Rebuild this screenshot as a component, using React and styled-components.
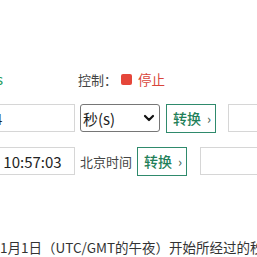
import React from 'react';
import styled, { createGlobalStyle } from 'styled-components';

const Global = createGlobalStyle`
  html, body {
    margin: 0;
    padding: 0;
    background: #fff;
    overflow: hidden;
  }
  body {
    font-family: "Noto Sans CJK SC", "Noto Sans", sans-serif;
    color: #333;
  }
`;

const Page = styled.div`
  width: 420px;
  margin-left: -90px;
  padding-top: 68px;
`;

const Row = styled.div`
  display: flex;
  align-items: center;
  height: ${p => p.h || 28}px;
  margin-bottom: ${p => p.mb || 0}px;
`;

const Status = styled.div`
  width: 93px;
  margin-right: 75px;
  display: flex;
  justify-content: flex-end;
  font-size: 14px;
  color: #2a9d5c;
  white-space: nowrap;
  overflow: hidden;
  flex-shrink: 0;
`;

const Label = styled.span`
  font-size: 13px;
  color: #444;
  margin-right: ${p => p.mr || 0}px;
  white-space: nowrap;
  flex-shrink: 0;
`;

const StopBtn = styled.span`
  display: inline-flex;
  align-items: center;
  gap: 6px;
  font-size: 13.5px;
  color: #d9453a;
`;

const Square = styled.span`
  width: 11px;
  height: 11px;
  border-radius: 2px;
  background: #e5463a;
  flex-shrink: 0;
`;

const Input = styled.div`
  box-sizing: border-box;
  width: ${p => p.w}px;
  height: 28px;
  border: 1px solid #d6d6d6;
  background: #fff;
  padding-left: ${p => p.pl || 6}px;
  font-size: 15px;
  color: #222;
  display: flex;
  align-items: center;
  white-space: nowrap;
  overflow: hidden;
  flex-shrink: 0;
  margin-right: ${p => p.mr || 0}px;
`;

const Select = styled.div`
  box-sizing: border-box;
  width: 80px;
  height: 28px;
  border: 1px solid #767676;
  border-radius: 3px;
  display: flex;
  align-items: center;
  justify-content: space-between;
  padding: 0 4px 0 2px;
  font-size: 15px;
  color: #222;
  flex-shrink: 0;
  margin-right: 6px;
`;

const Button = styled.button`
  box-sizing: border-box;
  width: 50px;
  height: 29px;
  border: 1px solid #2f8a6c;
  background: #fff;
  color: #1f8059;
  font-family: inherit;
  font-size: 14px;
  font-weight: 500;
  padding: 0 0 0 2px;
  display: inline-flex;
  align-items: center;
  justify-content: center;
  gap: 6px;
  flex-shrink: 0;
  margin-right: ${p => p.mr || 0}px;
`;

const Arrow = styled.span`
  font-size: 13px;
  color: #4a6a5c;
`;

const Desc = styled.p`
  margin: 0;
  margin-left: 90px;
  font-size: 13.5px;
  color: #333;
  white-space: nowrap;
`;

function Chevron() {
  return (
    <svg width="12" height="12" viewBox="0 0 12 12">
      <path d="M2 4 L6 8 L10 4" fill="none" stroke="#111" strokeWidth="2.2" strokeLinecap="round" strokeLinejoin="round" />
    </svg>
  );
}

function Convert({ mr }) {
  return (
    <Button mr={mr}>
      转换<Arrow>›</Arrow>
    </Button>
  );
}

export default function App() {
  return (
    <>
      <Global />
      <Page>
        <Row h={22} mb={14}>
          <Status>s</Status>
          <Label mr={4}>控制：</Label>
          <StopBtn><Square />停止</StopBtn>
        </Row>
        <Row mb={15}>
          <Input w={165} pl={8} mr={5}>1700016964</Input>
          <Select>秒(s)<Chevron /></Select>
          <Convert mr={12} />
          <Input w={120} />
        </Row>
        <Row mb={62}>
          <Input w={165} pl={12} mr={5}>2023-11-15 10:57:03</Input>
          <Label mr={5}>北京时间</Label>
          <Convert mr={13} />
          <Input w={120} />
        </Row>
        <Desc>1月1日（UTC/GMT的午夜）开始所经过的秒数，不考虑闰秒。</Desc>
      </Page>
    </>
  );
}
